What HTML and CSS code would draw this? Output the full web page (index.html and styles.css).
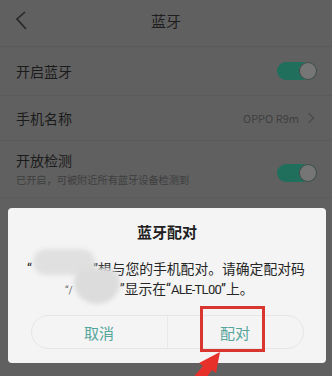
FILE: index.html
```html
<!DOCTYPE html>
<html lang="zh">
<head>
<meta charset="utf-8">
<link rel="stylesheet" href="styles.css">
</head>
<body>
<div class="screen">
  <header class="topbar">
    <svg class="back" width="14" height="22" viewBox="0 0 14 22"><path d="M10 2 L2 9 L11 19" fill="none" stroke="#262626" stroke-width="1.6"/></svg>
    <div class="title">蓝牙</div>
  </header>
  <div class="row">
    <span class="label">开启蓝牙</span>
    <span class="toggle"><span class="knob"></span></span>
  </div>
  <div class="row">
    <span class="label">手机名称</span>
    <span class="value">OPPO R9m <svg width="8" height="12" viewBox="0 0 8 12"><path d="M1.5 1 L6.5 6 L1.5 11" fill="none" stroke="#4a4a4a" stroke-width="1.2"/></svg></span>
  </div>
  <div class="row tall">
    <div class="texts">
      <span class="label">开放检测</span>
      <span class="sub">已开启，可被附近所有蓝牙设备检测到</span>
    </div>
    <span class="toggle"><span class="knob"></span></span>
  </div>
  <div class="row partial">
    <span class="label small">可用设备</span>
    <span class="dot"></span>
  </div>

  <div class="dialog">
    <div class="dtitle">蓝牙配对</div>
    <div class="dtext">
      <p class="l1">“<span class="gap1"></span>”想与您的手机配对。请确定配对码</p>
      <p class="l2"><span class="mark">“/</span><span class="gap2"></span>”显示在“<span class="code">ALE-TL00</span>”上。</p>
    </div>
    <div class="buttons">
      <div class="btn">取消</div>
      <div class="sep"></div>
      <div class="btn">配对</div>
    </div>
    <span class="blob b1"></span>
    <span class="blob b2"></span>
  </div>
  <span class="highlight"></span>
  <svg class="arrow" width="50" height="30" viewBox="0 0 50 30"><polygon points="30,1 26,22 22,19 14,30 0,30 13,15 9,12" fill="#e8302a"/></svg>
</div>
</body>
</html>
```
FILE: styles.css
```css
html, body { margin: 0; padding: 0; }
body {
  width: 332px; height: 376px; overflow: hidden;
  background: #5f5f5f;
  font-family: "Noto Sans CJK SC", "Noto Sans", sans-serif;
}
.screen { position: relative; width: 332px; height: 376px; background: #606060; }
.topbar {
  height: 46px; display: flex; align-items: center; justify-content: center;
  position: relative; border-bottom: 1px solid #595959;
}
.back { position: absolute; left: 15px; top: 10px; }
.title { font-size: 15px; color: #1e1e1e; margin-top: -5px; }
.row {
  display: flex; align-items: center; justify-content: space-between;
  padding: 0 15px 0 16px; height: 48px; border-bottom: 1px solid #5b5b5b;
}
.row:nth-of-type(2) { height: 44px; }
.row.tall { height: 56px; }
.label { font-size: 14px; color: #1b1b1b; }
.label.small { font-size: 13px; color: #2a2a2a; }
.texts { display: flex; flex-direction: column; line-height: 19px; margin-top: 2px; }
.sub { font-size: 10.2px; color: #3e3e3e; }
.value { font-size: 11px; color: #3f3f3f; display: flex; align-items: center; gap: 8px; margin-right: 2px; }
.toggle {
  width: 40px; height: 18px; border-radius: 9px; background: #1f6f5c; position: relative;
}
.knob {
  position: absolute; right: 0; top: 0; width: 18px; height: 18px; border-radius: 50%;
  background: #767676; box-shadow: 0 0 0 1px #3f4a46 inset;
}
.row.tall .toggle { margin-top: 8px; }
.partial { height: 30px; border: none; }
.dot { width: 10px; height: 10px; border-radius: 50%; background: #2e6a5a; margin-right: 16px; }

.dialog {
  position: absolute; left: 8px; top: 208px; width: 318px; height: 155px;
  background: #f4f4f4; border-radius: 4px; box-sizing: border-box;
  display: flex; flex-direction: column; align-items: center;
}
.dtitle { font-size: 15px; font-weight: 600; color: #202020; margin-top: 13px; line-height: 22px; }
.dtext {
  align-self: stretch; padding-left: 19px;
  margin-top: 16px; font-size: 13.8px; color: #262626; line-height: 20px;
  font-family: "Roboto", "Noto Sans CJK SC", sans-serif;
}
.dtext p { margin: 0; white-space: nowrap; }
.gap1 { display: inline-block; width: 61px; }
.mark { display: inline-block; margin-left: 38px; color: #6a6a6a; font-size: 10px; }
.gap2 { display: inline-block; width: 47px; }
.code { font-size: 13px; letter-spacing: -0.7px; }
.buttons {
  margin-top: 14px; width: 273px; height: 34px; border: 1px solid #e6e6e6; border-radius: 17px;
  display: flex; align-items: center; box-sizing: border-box;
}
.btn { flex: 1; text-align: center; font-size: 15px; color: #55a59c; }
.sep { width: 1px; height: 32px; background: #e9e9e9; }
.blob { position: absolute; background: #e0e0e0; filter: blur(2px); }
.b1 { left: 25px; top: 41px; width: 62px; height: 26px; border-radius: 13px; }
.b2 { left: 66px; top: 60px; width: 46px; height: 36px; border-radius: 14px 14px 22px 22px; background: #dcdcdc; }
.highlight {
  position: absolute; left: 200px; top: 306px; width: 59px; height: 40px;
  border: 3px solid #d8362f;
}
.arrow { position: absolute; left: 190px; top: 351px; }
```
